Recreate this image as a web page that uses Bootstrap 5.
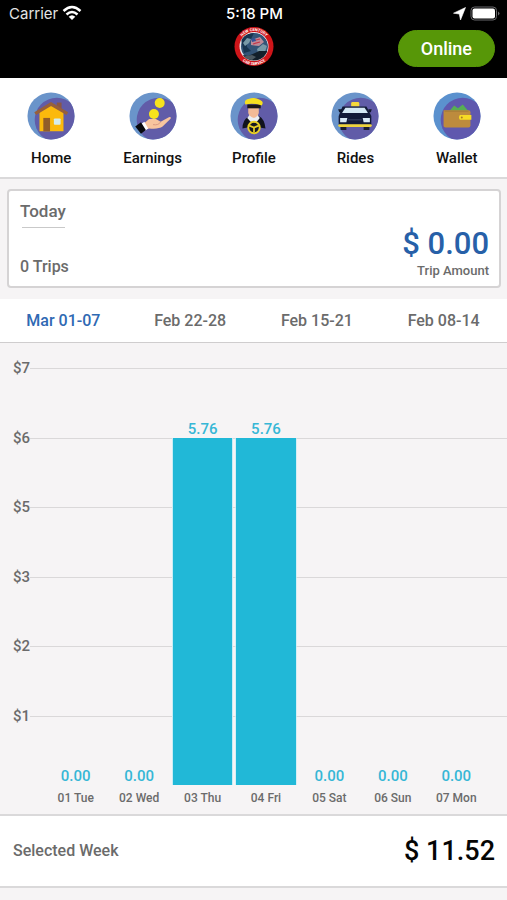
<!DOCTYPE html>
<html lang="en">
<head>
<meta charset="utf-8">
<meta name="viewport" content="width=device-width, initial-scale=1">
<title>Driver earnings</title>
<link rel="stylesheet" href="https://cdn.jsdelivr.net/npm/bootstrap@5.3.0/dist/css/bootstrap.min.css">
<style>
  body { font-family: Roboto, "Liberation Sans", sans-serif; font-weight: 500; color: #6b6b6b; background: #f6f4f5; }
  svg { display: block; }
  a { text-decoration: none; }
  .thirds { display: grid; grid-template-columns: 1fr auto 1fr; }
  .statusbar { font: 400 15px/20px Inter, sans-serif; padding: 4px 7px 0 9px; height: 26px; color: #e4e4e4; }
  .clock { font-weight: 500; color: #fff; }
  .brandbar { padding: 0 12px; height: 52px; }
  .btn-online { --bs-btn-font-size: 18px; --bs-btn-font-weight: 500; --bs-btn-line-height: 24px; --bs-btn-padding-y: 5px; --bs-btn-padding-x: 22px;
    --bs-btn-color: #fff; --bs-btn-bg: #579708; --bs-btn-border-color: #579708; --bs-btn-hover-color: #fff; --bs-btn-hover-bg: #4c8506; margin-top: 4px; height: 37px; }
  .mainnav { height: 101px; padding-top: 14px; border-bottom: 2px solid #dad9da; }
  .mainnav a { color: #111; font-size: 15px; line-height: 20px; }
  .mainnav svg { margin-bottom: 8px; }
  .mainnav .col { padding-left: 1px; }
  .summary { margin: 10px 6px 11px 7px; padding: 8px 10px 6px 11px; border: 2px solid #d5d3d4; border-radius: 4px; height: 99px; }
  .today { font-size: 17px; line-height: 24px; }
  .today::after { content: ""; display: block; border-top: 1px solid #c9c9c9; margin: 4px 0 0 2px; width: 43px; }
  .trips { font-size: 16px; line-height: 20px; margin-bottom: 3px; }
  .total { font-size: 31px; line-height: 36px; color: #2760a8; }
  .caption { font-size: 13px; line-height: 18px; }
  .weeks { height: 44px; border-bottom: 1px solid #cfcdce; }
  .weeks a { color: #6b6b6b; font-size: 16px; line-height: 20px; }
  .weeks a.active { color: #2f69b3; }
  .chart { padding-top: 25px; height: 473px; border-bottom: 2px solid #dad9da; }
  .plot { display: grid; height: 417px; }
  .plot > * { grid-area: 1 / 1; }
  .tick { flex: 1 1 0; padding-left: 13px; font-size: 15px; line-height: 20px; }
  .tick span { margin-top: -10px; }
  .tick::after { content: ""; flex: 1; height: 1px; background: #dad8d9; }
  .bars, .days { display: grid; grid-template-columns: repeat(7, 1fr); padding: 0 19px 0 44px; text-align: center; }
  .amount { color: #36b7d6; font-size: 15px; line-height: 18px; }
  .fill { background: #21b8d7; margin: 0 2px; box-shadow: 0 0 0 1px #c8edf5; clip-path: inset(0 -1px); }
  .days { font-size: 12px; line-height: 16px; margin-top: 5px; }
  .week-total { height: 72px; padding: 0 12px 0 13px; border-bottom: 2px solid #dad9da; }
  .week-label { font-size: 16px; }
  .week-sum { font-size: 27px; color: #050505; }
</style>
<script src="https://cdn.jsdelivr.net/npm/bootstrap@5.3.0/dist/js/bootstrap.bundle.min.js"></script>
</head>
<body>
<header class="bg-black">
  <div class="statusbar thirds">
    <div class="d-flex align-items-start">
      <span>Carrier</span>
      <svg class="ms-1" width="20" height="19" viewBox="0 0 20 19" aria-label="Wi-Fi"><g fill="none" stroke="#fff" stroke-width="2.5"><path d="M1.500 7Q10-1 18.500 7M4.500 10.500Q10 5.500 15.500 10.500"/></g><path d="M6.700 12.800Q10 9.800 13.300 12.800L10 16z" fill="#fff"/></svg>
    </div>
    <span class="clock">5:18 PM</span>
    <div class="d-flex justify-content-end gap-1">
      <svg width="13" height="19" viewBox="0 0 13 19" aria-label="Location"><path d="M0.500 9.200L12.500 3.500 7.500 16 6.300 10z" fill="#fff" stroke="#fff" stroke-width=".6"/></svg>
      <svg width="30" height="19" viewBox="0 0 30 19" aria-label="Battery"><rect x="1" y="3" width="25.500" height="13" rx="3.500" fill="none" stroke="#69696c"/><rect x="2.500" y="4.500" width="22.500" height="10" rx="2" fill="#fff"/><path d="M28 7.500Q31 9.500 28 11.500z" fill="#69696c"/></svg>
    </div>
  </div>
  <div class="brandbar thirds">
    <span></span>
    <svg width="40" height="42" viewBox="0 0 40 42" role="img" aria-label="New Century Car Service">
      <defs><path id="upper" d="M4.500 20.500A15.500 15.500 0 0 1 35.500 20.500"/><path id="lower" d="M1.500 20.500A18.500 18.500 0 0 0 38.500 20.500"/>
      <clipPath id="globe"><circle cx="20" cy="20.500" r="14"/></clipPath></defs>
      <circle cx="20" cy="20.500" r="19.500" fill="#ce1519"/><circle cx="20" cy="20.500" r="14.500" fill="#e9e9ed"/>
      <g clip-path="url(#globe)"><circle cx="20.500" cy="20.500" r="13.500" fill="#335477"/><path d="M7 13Q12 7 20 7L17 13 12 15 13 21 17 25 10 27z" fill="#17344f"/><path d="M9 17l4-5 4 1-2 4-4 3zM23 23l6-5 4 2-2 6-7 1z" fill="#7899a7"/><path d="M17 14l9-3 4 5-5 4-8-1z" fill="#bd8b98"/><path d="M18 15l8-2M19 18l7-2" stroke="#c63548" stroke-width="1.200"/><path d="M17 13l4-1 1 3-4 1z" fill="#34549a"/><path d="M5 28l9 2 7-3 4-2h10v11H8z" fill="#13202b"/><path d="M11 30l7-1 4 2-4 3-6-1z" fill="#4c5961"/></g>
      <g fill="#fff" font-family="Roboto, sans-serif" font-size="4" font-weight="700" text-anchor="middle"><text><textPath href="#upper" startOffset="50%">NEW CENTURY</textPath></text><text><textPath href="#lower" startOffset="50%">CAR SERVICE</textPath></text></g>
    </svg>
    <div class="d-flex justify-content-end align-items-start"><button type="button" class="btn btn-online rounded-pill">Online</button></div>
  </div>
</header>

<nav class="mainnav row row-cols-5 g-0 bg-white text-center" aria-label="Main">
  <a class="col" href="#home"><svg class="mx-auto" width="48" height="48" viewBox="0 0 50 50"><defs><clipPath id="disc"><circle cx="25" cy="25" r="24.500"/></clipPath></defs><circle cx="25" cy="25" r="24.500" fill="#6a94ca"/><circle cx="31" cy="29" r="23" fill="#615ca8" clip-path="url(#disc)"/><path d="M31 11h5v9h-5z" fill="#8b5743"/><path d="M13 21L25 12 38 21v20H13z" fill="#fbb90c"/><path d="M8.500 22.500L25 12.500 42 22.500" fill="none" stroke="#97603b" stroke-width="3.500"/><path d="M17 27h7v14h-7z" fill="#925d29"/><rect x="28" y="27.500" width="7" height="6.500" rx="1" fill="#d5edec"/></svg>Home</a>
  <a class="col" href="#earnings"><svg class="mx-auto" width="48" height="48" viewBox="0 0 50 50"><circle cx="25" cy="25" r="24.500" fill="#6a94ca"/><circle cx="31" cy="29" r="23" fill="#615ca8" clip-path="url(#disc)"/><circle cx="32" cy="11.500" r="5.200" fill="#f7e31c"/><circle cx="26" cy="23" r="5.200" fill="#f7e31c"/><path d="M14 34L21 28H28L33 31 42 26Q45 26 43 28L35 36Q31 39 21 38L17 39z" fill="#f8c49e"/><path d="M25 34Q31 35 33 31" fill="none" stroke="#d79882"/><path d="M13 33l3-2 4 7-3 2z" fill="#fff"/><path d="M6.500 36l6-4.500 5 8-5 4z" fill="#08090d"/></svg>Earnings</a>
  <a class="col" href="#profile"><svg class="mx-auto" width="48" height="48" viewBox="0 0 50 50"><circle cx="25" cy="25" r="24.500" fill="#6a94ca"/><circle cx="31" cy="29" r="23" fill="#615ca8" clip-path="url(#disc)"/><path d="M13 38Q13 29 19 26L24 24 30 25Q36 28 37 38L31 37H18z" fill="#11131d"/><path d="M18 27L21 23H28L31 27 25 35z" fill="#e9edf3"/><path d="M19 15h11v7q-1 4-5 5-5-1-6-5z" fill="#f2ba96"/><path d="M18 13h14v4H18z" fill="#1b1717"/><path d="M16 13Q14 8 20 7Q25 5 31 8Q36 10 33 14Q24 11 16 13" fill="#f5df1f"/><circle cx="25" cy="37" r="6" fill="#151721" stroke="#e8ce25" stroke-width="2"/><path d="M20 35l5 2 5-2M25 37v5" fill="none" stroke="#e8ce25" stroke-width="1.800"/></svg>Profile</a>
  <a class="col" href="#rides"><svg class="mx-auto" width="48" height="48" viewBox="0 0 50 50"><circle cx="25" cy="25" r="24.500" fill="#6a94ca"/><circle cx="31" cy="29" r="23" fill="#615ca8" clip-path="url(#disc)"/><path d="M21 15v-3q0-1.500 1.500-1.500H28q1.500 0 1.500 1.500v3z" fill="#f7d83b"/><path d="M12 15H37L42 25V34H8V25z" fill="#121a38"/><path d="M15 16.500H35L38.500 22H11.500z" fill="#d4e8f4"/><path d="M7.500 18h4v3h-3zM39 18h3.500l-1 3H39z" fill="#11182c"/><path d="M9.500 27h7.500l-1 4.500H9.500zM33 27h7.500v4.500H34z" fill="#d8e9f6"/><path d="M17.500 29H32" stroke="#3d4664"/><rect x="7.500" y="33.500" width="35" height="3" rx="1.500" fill="#eed33c"/><path d="M10 36.500h6v3h-6zM34 36.500h6v3h-6z" fill="#191c31"/></svg>Rides</a>
  <a class="col" href="#wallet"><svg class="mx-auto" width="48" height="48" viewBox="0 0 50 50"><circle cx="25" cy="25" r="24.500" fill="#5b91ce"/><circle cx="31" cy="29" r="23" fill="#5f58ae" clip-path="url(#disc)"/><path d="M17 20L22 14 26 17 31 13 37 20z" fill="#57ae53"/><path d="M11 19h26q2 0 2 2v14q0 2-2 2H13q-2 0-2-2z" fill="#bd8b3d"/><path d="M12 20H37" stroke="#a47b38"/><path d="M28 24h12v5H28q-2-2.500 0-5" fill="#f6da25"/><circle cx="30" cy="26.500" r="1" fill="#a97929"/></svg>Wallet</a>
</nav>

<main>
  <section class="summary bg-white d-flex justify-content-between">
    <div class="d-flex flex-column justify-content-between"><div class="today">Today</div><div class="trips">0 Trips</div></div>
    <div class="d-flex flex-column justify-content-end text-end"><div class="total">$ 0.00</div><div class="caption">Trip Amount</div></div>
  </section>

  <nav class="weeks row row-cols-4 g-0 bg-white text-center align-items-center" aria-label="Weeks">
    <a class="col active" aria-current="true" href="#w1">Mar 01-07</a>
    <a class="col" href="#w2">Feb 22-28</a>
    <a class="col" href="#w3">Feb 15-21</a>
    <a class="col" href="#w4">Feb 08-14</a>
  </nav>

  <section class="chart" aria-label="Daily earnings">
    <div class="plot">
      <div class="d-flex flex-column">
        <div class="tick d-flex"><span>$7</span></div>
        <div class="tick d-flex"><span>$6</span></div>
        <div class="tick d-flex"><span>$5</span></div>
        <div class="tick d-flex"><span>$3</span></div>
        <div class="tick d-flex"><span>$2</span></div>
        <div class="tick d-flex"><span>$1</span></div>
      </div>
      <div class="bars">
        <div class="d-flex flex-column justify-content-end"><div class="amount">0.00</div></div>
        <div class="d-flex flex-column justify-content-end"><div class="amount">0.00</div></div>
        <div class="d-flex flex-column justify-content-end"><div class="amount">5.76</div><div class="fill" style="height: 83.2%"></div></div>
        <div class="d-flex flex-column justify-content-end"><div class="amount">5.76</div><div class="fill" style="height: 83.2%"></div></div>
        <div class="d-flex flex-column justify-content-end"><div class="amount">0.00</div></div>
        <div class="d-flex flex-column justify-content-end"><div class="amount">0.00</div></div>
        <div class="d-flex flex-column justify-content-end"><div class="amount">0.00</div></div>
      </div>
    </div>
    <div class="days"><span>01 Tue</span><span>02 Wed</span><span>03 Thu</span><span>04 Fri</span><span>05 Sat</span><span>06 Sun</span><span>07 Mon</span></div>
  </section>

  <section class="week-total bg-white d-flex justify-content-between align-items-center">
    <span class="week-label">Selected Week</span><span class="week-sum">$ 11.52</span>
  </section>
</main>
</body>
</html>
